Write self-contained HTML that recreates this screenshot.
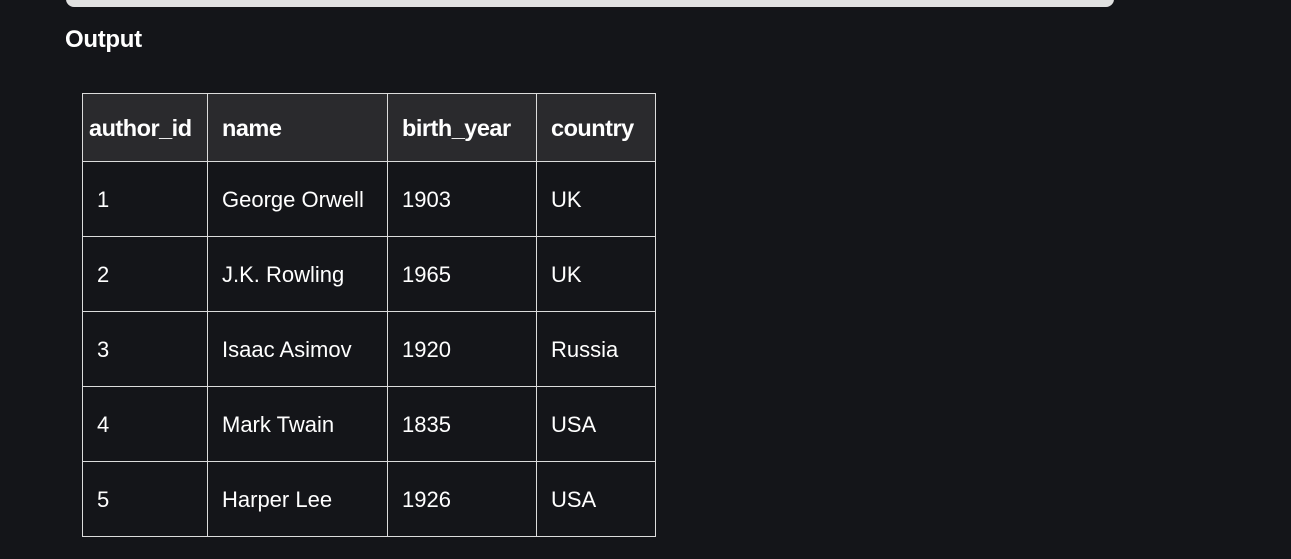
<!DOCTYPE html>
<html><head><style>
html,body{margin:0;padding:0;background:#141519;width:1291px;height:559px;overflow:hidden;font-family:"Liberation Sans",sans-serif;color:#fff}
.bar{position:absolute;left:66px;top:-10px;width:1048px;height:17px;background:#e1e1e1;border-radius:8px}
.out{position:absolute;left:65px;top:26px;font-size:24px;font-weight:bold;letter-spacing:-0.3px}
table{position:absolute;left:82px;top:93px;border-collapse:collapse;table-layout:fixed;width:573px}
td,th{border:1px solid #dcdcdc;padding:0 0 0 14px;text-align:left;font-size:22px;white-space:nowrap;overflow:visible}
th{background:#2a2a2d;height:66px;font-weight:bold;font-size:23.5px;letter-spacing:-0.5px;padding-top:1px}
td{height:72px;padding-top:2px}
th:first-child{padding-left:6px}
</style></head><body>
<div class="bar"></div>
<div class="out">Output</div>
<table>
<colgroup><col style="width:125px"><col style="width:180px"><col style="width:149px"><col style="width:119px"></colgroup>
<tr><th>author_id</th><th>name</th><th>birth_year</th><th>country</th></tr>
<tr><td>1</td><td>George Orwell</td><td>1903</td><td>UK</td></tr>
<tr><td>2</td><td>J.K. Rowling</td><td>1965</td><td>UK</td></tr>
<tr><td>3</td><td>Isaac Asimov</td><td>1920</td><td>Russia</td></tr>
<tr><td>4</td><td>Mark Twain</td><td>1835</td><td>USA</td></tr>
<tr><td>5</td><td>Harper Lee</td><td>1926</td><td>USA</td></tr>
</table>
</body></html>
